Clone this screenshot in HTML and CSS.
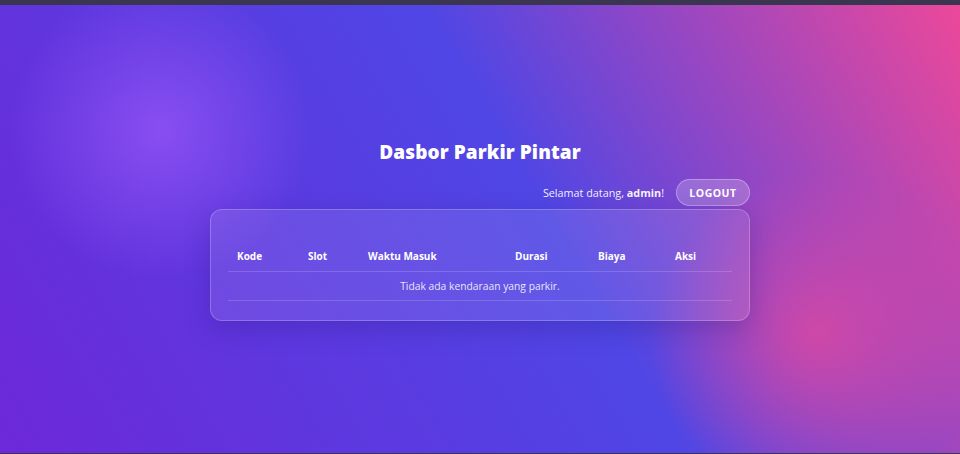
FILE: index.html
```html
<!DOCTYPE html>
<html lang="id">
<head>
<meta charset="utf-8">
<title>Dasbor Parkir Pintar</title>
<link rel="stylesheet" href="styles.css">
</head>
<body>
<div class="screen">
  <main class="wrap">
    <h1 class="title">Dasbor Parkir Pintar</h1>
    <div class="userbar">
      <span class="welcome">Selamat datang, <b>admin</b>!</span>
      <button class="logout">LOGOUT</button>
    </div>
    <section class="card">
      <table class="tbl">
        <colgroup>
          <col class="c1"><col class="c2"><col class="c3"><col class="c4"><col class="c5"><col class="c6">
        </colgroup>
        <thead>
          <tr><th>Kode</th><th>Slot</th><th>Waktu Masuk</th><th>Durasi</th><th>Biaya</th><th>Aksi</th></tr>
        </thead>
        <tbody>
          <tr><td colspan="6" class="empty">Tidak ada kendaraan yang parkir.</td></tr>
        </tbody>
      </table>
    </section>
  </main>
</div>
</body>
</html>
```
FILE: styles.css
```css
* { box-sizing: border-box; }
html, body { margin: 0; padding: 0; }
body {
  background: #3b3650;
  padding: 5px 0 1px;
  font-family: "Open Sans", "Noto Sans", sans-serif;
  color: #fff;
}
.screen {
  height: 448px;
  display: flex;
  align-items: center;
  justify-content: center;
  background:
    radial-gradient(circle at 160px 125px, rgba(160, 90, 250, 0.65) 0, rgba(160, 90, 250, 0) 150px),
    radial-gradient(circle at 815px 330px, rgba(236, 72, 153, 0.7) 0, rgba(236, 72, 153, 0) 165px),
    linear-gradient(60deg, #6d28d9 0%, #4f46e5 56%, #ec4899 100%);
}
.wrap {
  width: 540px;
  display: flex;
  flex-direction: column;
  margin-top: 2px;
}
.title {
  margin: 0;
  text-align: center;
  font-size: 19px;
  line-height: 26px;
  font-weight: 800;
  letter-spacing: 0.1px;
}
.userbar {
  margin-top: 14px;
  display: flex;
  justify-content: flex-end;
  align-items: center;
  gap: 12px;
}
.welcome {
  font-size: 10.8px;
  color: rgba(255, 255, 255, 0.95);
}
.welcome b { font-weight: 700; }
.logout {
  height: 27px;
  width: 74px;
  border-radius: 14px;
  border: 1px solid rgba(255, 255, 255, 0.3);
  background: rgba(255, 255, 255, 0.2);
  color: #fff;
  font-family: inherit;
  font-size: 10.5px;
  font-weight: 700;
  letter-spacing: 0.5px;
  padding: 0;
}
.card {
  margin-top: 3px;
  border-radius: 12px;
  border: 1px solid rgba(255, 255, 255, 0.22);
  background: rgba(255, 255, 255, 0.1);
  box-shadow: 0 8px 24px rgba(40, 20, 120, 0.25);
  padding: 33px 17px 19px;
}
.tbl {
  width: 100%;
  border-collapse: collapse;
  table-layout: fixed;
}
.c1 { width: 71px; }
.c2 { width: 60px; }
.c3 { width: 147px; }
.c4 { width: 83px; }
.c5 { width: 77px; }
.c6 { width: 66px; }
.tbl th {
  text-align: left;
  font-size: 10px;
  font-weight: 700;
  padding: 6px 0 8px 9px;
  line-height: 14px;
  border-bottom: 1px solid rgba(255, 255, 255, 0.16);
}
.tbl td {
  font-size: 10.3px;
  line-height: 14px;
  padding: 7px 9px 7px;
  border-bottom: 1px solid rgba(255, 255, 255, 0.16);
  color: rgba(255, 255, 255, 0.88);
}
.tbl td.empty { text-align: center; }
```
